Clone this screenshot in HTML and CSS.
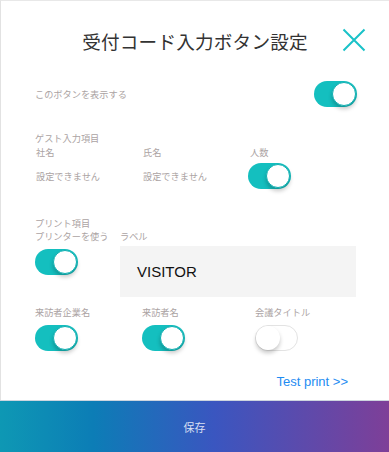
FILE: index.html
```html
<!DOCTYPE html>
<html lang="ja">
<head>
  <meta charset="UTF-8">
  <meta name="viewport" content="width=device-width, initial-scale=1.0">
  <title>受付コード入力ボタン設定</title>
  <link rel="stylesheet" href="styles.css">
</head>
<body>
  <div class="page">
    <div class="header">
      <span></span>
      <h1 class="title">受付コード入力ボタン設定</h1>
      <span class="close">
        <svg width="24" height="24" viewBox="0 0 24 24">
          <path d="M1.5 1.5 L22.5 22.5 M22.5 1.5 L1.5 22.5" stroke="#19c2c8" stroke-width="2" fill="none"/>
        </svg>
      </span>
    </div>

    <div class="row-show">
      <span class="label">このボタンを表示する</span>
      <span class="toggle on"><span class="knob"></span></span>
    </div>

    <div class="guest">
      <div class="label">ゲスト入力項目</div>
      <div class="cols3">
        <span class="label">社名</span>
        <span class="label">氏名</span>
        <span class="label">人数</span>
      </div>
      <div class="cols3 guest-vals">
        <span class="label">設定できません</span>
        <span class="label">設定できません</span>
        <span class="toggle on"><span class="knob"></span></span>
      </div>
    </div>

    <div class="print">
      <div class="label">プリント項目</div>
      <div class="cols2">
        <span class="label">プリンターを使う</span>
        <span class="label">ラベル</span>
      </div>
      <div class="cols2 print-vals">
        <span class="toggle on"><span class="knob"></span></span>
        <div class="label-box">VISITOR</div>
      </div>
    </div>

    <div class="items">
      <div class="cols3b">
        <span class="label">来訪者企業名</span>
        <span class="label">来訪者名</span>
        <span class="label">会議タイトル</span>
      </div>
      <div class="cols3b item-vals">
        <span class="toggle on"><span class="knob"></span></span>
        <span class="toggle on"><span class="knob"></span></span>
        <span class="toggle off"><span class="knob"></span></span>
      </div>
    </div>

    <div class="test">
      <a class="test-link">Test print &gt;&gt;</a>
    </div>

    <div class="footer">保存</div>
  </div>
</body>
</html>
```

FILE: styles.css
```css
*{
  margin: 0;
  padding: 0;
  box-sizing: border-box;
}
body{
  font-family: "Noto Sans CJK JP", "Liberation Sans", sans-serif;
  background: #fff;
}
.page{
  height: 452px;
  display: flex;
  flex-direction: column;
  border-top: 1px solid #e8e8e8;
  border-left: 1px solid #e2e2e2;
}
.header{
  height: 78px;
  display: grid;
  grid-template-columns: 1fr auto 1fr;
  align-items: center;
}
.title{
  font-size: 18.6px;
  font-weight: 400;
  color: #333;
  letter-spacing: 0.2px;
}
.close{
  justify-self: end;
  margin-right: 23px;
  margin-top: 0;
  display: flex;
}
.label{
  font-size: 9.2px;
  line-height: 13px;
  color: #aba3a3;
  white-space: nowrap;
}
.row-show{
  display: flex;
  justify-content: space-between;
  align-items: center;
  margin-top: 2px;
  padding: 0 32px 0 34px;
}
.toggle{
  width: 43px;
  height: 26px;
  border-radius: 13px;
  display: flex;
  align-items: center;
  padding: 1px;
}
.toggle.on{
  background: #14bfbf;
  justify-content: flex-end;
}
.toggle.off{
  background: #fff;
  border: 1px solid #e3e3e3;
  justify-content: flex-start;
  padding: 0;
}
.knob{
  width: 24px;
  height: 24px;
  border-radius: 50%;
  background: #fff;
  box-shadow: 0 3px 4px rgba(0,0,0,0.22);
}
.toggle.on .knob{
  border: 1px solid #0fb0b2;
}
.guest{
  margin-top: 24px;
  padding-left: 34px;
}
.guest > .label{
  line-height: 14px;
}
.cols3{
  display: grid;
  grid-template-columns: 107px 107px 1fr;
  padding-left: 1px;
}
.cols3 .label{
  line-height: 14px;
}
.guest-vals{
  margin-top: 4px;
  align-items: center;
}
.guest-vals .toggle{
  margin-left: -2px;
}
.print{
  margin-top: 28px;
  padding: 0 33px 0 34px;
}
.cols2{
  display: grid;
  grid-template-columns: 85px 1fr;
}
.print-vals{
  margin-top: 3px;
  align-items: start;
}
.print-vals .toggle{
  margin-top: 3px;
}
.label-box{
  height: 51px;
  background: #f4f4f4;
  display: flex;
  align-items: center;
  padding-left: 17px;
  font-family: "Liberation Sans", sans-serif;
  font-size: 15px;
  color: #111;
}
.items{
  margin-top: 9px;
  padding-left: 34px;
}
.cols3b{
  display: grid;
  grid-template-columns: 107px 113px 1fr;
}
.item-vals{
  margin-top: 6px;
}
.test{
  margin-top: 16px;
  padding-right: 41px;
  text-align: right;
}
.test-link{
  font-family: "Liberation Sans", sans-serif;
  font-size: 13px;
  line-height: 16px;
  color: #1e8cf2;
}
.footer{
  margin-top: auto;
  margin-left: -1px;
  height: 52px;
  border-top: 1px solid #cdd5de;
  background: linear-gradient(90deg, #0e98b4 0%, #0c7db6 24%, #3a56c0 55%, #7e3f98 100%);
  display: flex;
  align-items: center;
  justify-content: center;
  font-size: 11px;
  color: rgba(255,255,255,0.82);
}
```
